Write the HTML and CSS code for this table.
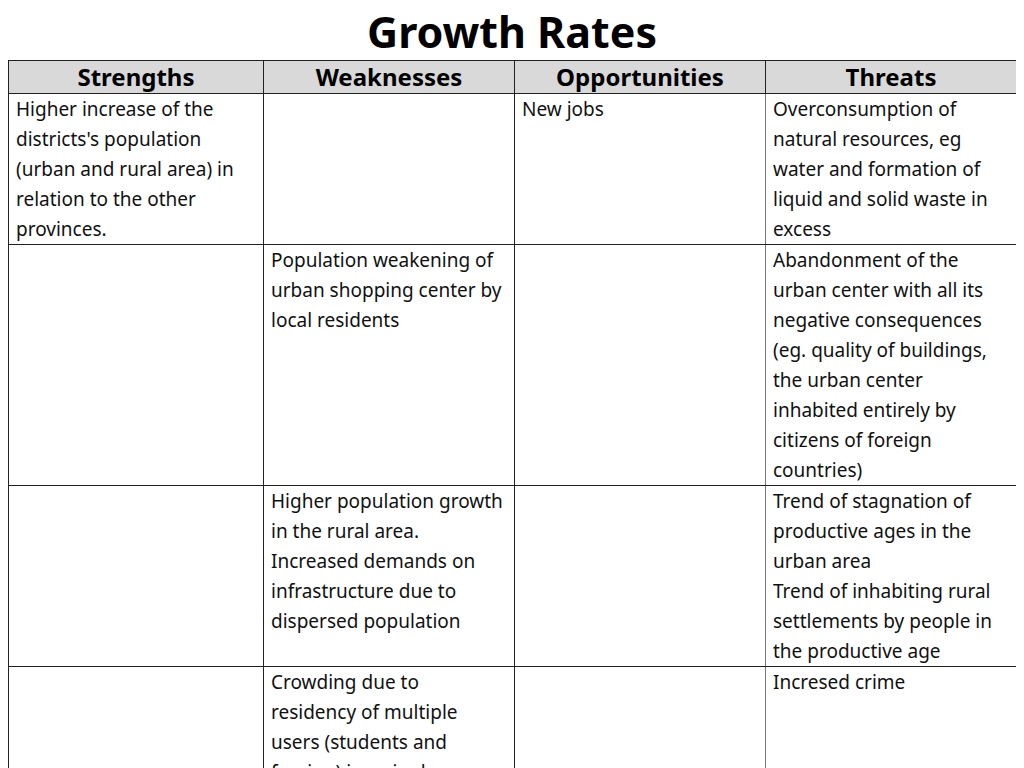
FILE: index.html
```html
<!DOCTYPE html>
<html>
<head>
<meta charset="utf-8">
<title>Growth Rates</title>
<link rel="stylesheet" href="styles.css">
</head>
<body>
<h1 class="title">Growth Rates</h1>
<table class="swot">
  <colgroup>
    <col class="c1"><col class="c2"><col class="c3"><col class="c4">
  </colgroup>
  <thead>
    <tr><th>Strengths</th><th>Weaknesses</th><th>Opportunities</th><th class="last">Threats</th></tr>
  </thead>
  <tbody>
    <tr>
      <td>Higher increase of the districts's population (urban and rural area) in relation to the other provinces.</td>
      <td></td>
      <td class="opp">New jobs</td>
      <td>Overconsumption of natural resources, eg water and formation of liquid and solid waste in excess</td>
    </tr>
    <tr>
      <td></td>
      <td>Population weakening of urban shopping center by local residents</td>
      <td class="opp"></td>
      <td>Abandonment of the urban center with all its negative consequences (eg. quality of buildings, the urban center inhabited entirely by citizens of foreign countries)</td>
    </tr>
    <tr>
      <td></td>
      <td>Higher population growth in the rural area.<br>Increased demands on infrastructure due to dispersed population<br>&nbsp;</td>
      <td class="opp"></td>
      <td>Trend of stagnation of productive ages in the urban area<br>Trend of inhabiting rural settlements by people in the productive age</td>
    </tr>
    <tr>
      <td></td>
      <td>Crowding due to residency of multiple users (students and foreign) in a single apartment</td>
      <td class="opp"></td>
      <td>Incresed crime</td>
    </tr>
  </tbody>
</table>
</body>
</html>
```
FILE: styles.css
```css
html, body {
  background: #ffffff;
}
body {
  margin: 0 8px;
  font-family: "Noto Sans", "Open Sans", sans-serif;
  color: #111111;
}
.title {
  margin: 0;
  padding-top: 4px;
  height: 56px;
  font-size: 43px;
  line-height: 56px;
  font-weight: 700;
  text-align: center;
  color: #000000;
}
.swot {
  width: 1008px;
  border-collapse: collapse;
  table-layout: fixed;
  border: 1px solid #222222;
}
.c1 { width: 255px; }
.c2, .c3, .c4 { width: 251px; }
.swot th {
  background: #d9d9d9;
  font-size: 24px;
  font-weight: 700;
  line-height: 32px;
  height: 32px;
  padding: 0;
  border: 1px solid #222222;
  text-align: center;
  color: #000000;
}
.swot td {
  font-size: 19px;
  line-height: 30px;
  padding: 0 6px 0 7px;
  vertical-align: top;
  border: 1px solid #222222;
  text-align: left;
}
.swot td.opp {
  border-right-color: #777777;
}
```
